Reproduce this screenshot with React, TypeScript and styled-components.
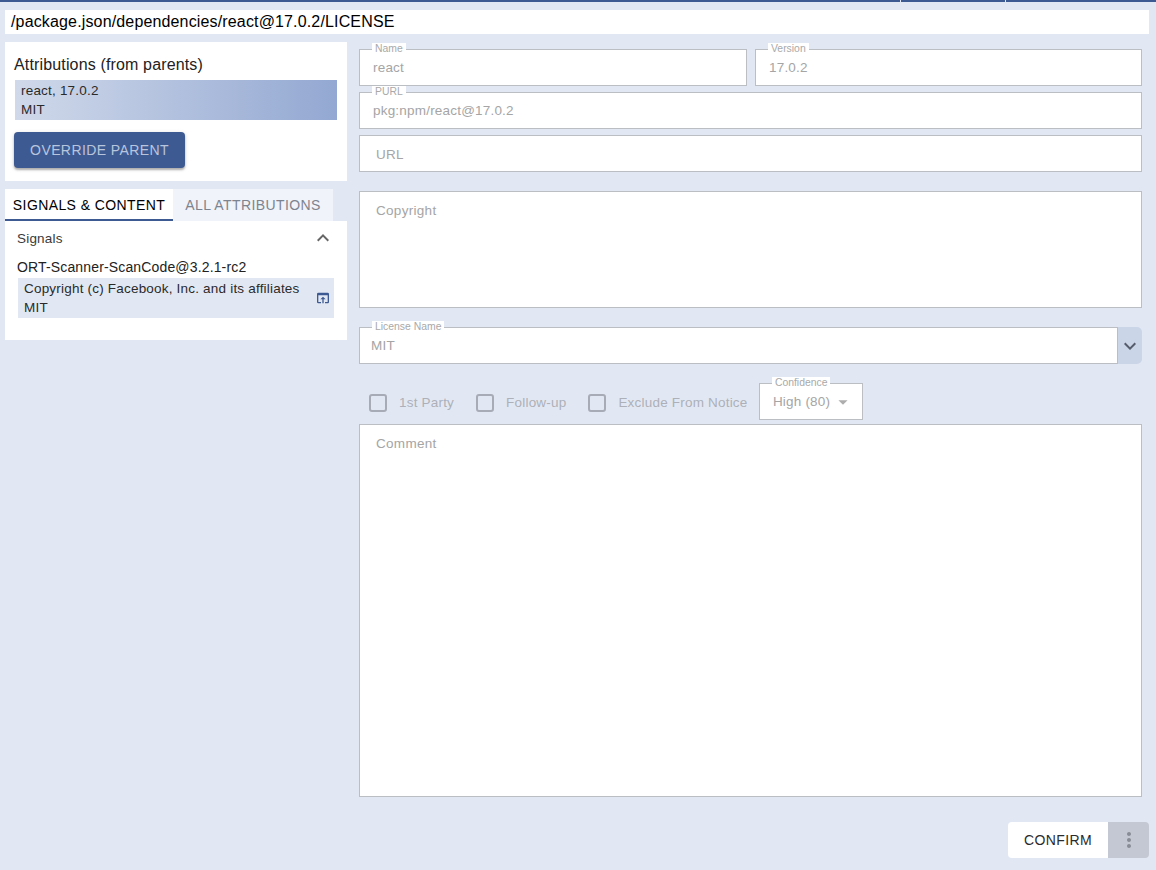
import { FC } from "react";
import styled, { createGlobalStyle } from "styled-components";
import {
  MdArrowDropDown,
  MdExpandLess,
  MdExpandMore,
  MdMoreVert,
  MdOpenInBrowser,
} from "react-icons/md";

const GlobalStyle = createGlobalStyle`
  html, body {
    margin: 0;
    padding: 0;
    height: 870px;
    overflow: hidden;
    background: #e2e8f3;
    font-family: "Liberation Sans", sans-serif;
  }
`;

const Page = styled.div`
  display: flex;
  flex-direction: column;
  width: 1156px;
  height: 870px;
`;

const TopBar = styled.div`
  display: flex;
  justify-content: flex-end;
  gap: 104px;
  height: 2px;
  padding-right: 150px;
  background: #3e5a93;
`;

const TopTick = styled.span`
  width: 1px;
  background: #e2e8f3;
`;

const PathBar = styled.div`
  height: 24px;
  margin: 8px 7px 8px 5px;
  padding-left: 6px;
  background: #fff;
  color: #000;
  font-size: 16px;
  line-height: 24px;
  letter-spacing: 0.15px;
`;

const Main = styled.div`
  display: flex;
  gap: 12px;
  padding-left: 5px;
`;

const LeftColumn = styled.div`
  display: flex;
  flex-direction: column;
  width: 342px;
`;

const ParentPanel = styled.section`
  height: 139px;
  margin-bottom: 8px;
  padding: 13px 10px 0 9px;
  box-sizing: border-box;
  background: #fff;
`;

const PanelTitle = styled.div`
  color: #222;
  font-size: 16px;
  letter-spacing: 0.15px;
  line-height: 20px;
  margin-bottom: 5px;
  height: 20px;
`;

const AttributionCard = styled.div`
  box-sizing: border-box;
  margin-left: 1px;
  height: 40px;
  padding: 1px 0 0 6px;
  background: linear-gradient(to right, #d0d9ea, #93a8d2);
  color: #2a2a2a;
  font-size: 13.5px;
  line-height: 19px;
  letter-spacing: 0.2px;
`;

const OverrideButton = styled.button`
  display: block;
  width: 171px;
  height: 36px;
  margin-top: 12px;
  padding: 0;
  border: 0;
  border-radius: 4px;
  background: #3e5a93;
  box-shadow: 0 2px 2px rgba(0, 0, 0, 0.25), 0 1px 4px rgba(0, 0, 0, 0.15);
  color: #b9c5dc;
  font-family: "Liberation Sans", sans-serif;
  font-size: 14px;
  font-weight: 400;
  letter-spacing: 0.4px;
  text-transform: uppercase;
`;

const Tabs = styled.div`
  display: flex;
  height: 32px;
`;

const Tab = styled.div<{ $active?: boolean }>`
  box-sizing: border-box;
  width: ${(p) => (p.$active ? "168px" : "160px")};
  padding-top: 7px;
  text-align: center;
  background: ${(p) => (p.$active ? "#fff" : "#f0f3f9")};
  border-bottom: 2px solid ${(p) => (p.$active ? "#3e5a93" : "transparent")};
  color: ${(p) => (p.$active ? "#000" : "#7e848f")};
  font-size: 14px;
  line-height: 18px;
  letter-spacing: 0.4px;
  text-transform: uppercase;
`;

const SignalsPanel = styled.section`
  display: flex;
  flex-direction: column;
  height: 119px;
  padding: 0 13px 0 12px;
  box-sizing: border-box;
  background: #fff;
`;

const SignalsHeader = styled.div`
  display: flex;
  align-items: center;
  justify-content: space-between;
  height: 34px;
  color: #3a3a3a;
  font-size: 13.5px;
  letter-spacing: 0.2px;
  svg {
    color: #666;
    margin-right: -1px;
  }
`;

const SourceName = styled.div`
  height: 23px;
  color: #222;
  font-size: 14px;
  line-height: 24px;
  letter-spacing: 0.15px;
`;

const SignalCard = styled.div`
  display: flex;
  align-items: center;
  justify-content: space-between;
  height: 40px;
  margin-left: 1px;
  padding: 0 3px 0 6px;
  background: #e2e8f3;
  color: #2a2a2a;
  font-size: 13.5px;
  line-height: 19px;
  letter-spacing: 0.2px;
  svg {
    color: #3e5a93;
  }
`;

const RightColumn = styled.div`
  display: flex;
  flex-direction: column;
  width: 790px;
  padding-top: 7px;
  box-sizing: border-box;
`;

const FormRows = styled.div`
  display: flex;
  flex-direction: column;
  width: 783px;
`;

const Row = styled.div<{ $after?: number }>`
  display: flex;
  gap: 8px;
  margin-bottom: ${(p) => p.$after ?? 6}px;
`;

const Field = styled.div<{ $height?: number; $width?: number }>`
  position: relative;
  box-sizing: border-box;
  flex: ${(p) => (p.$width ? `0 0 ${p.$width}px` : "1")};
  height: ${(p) => p.$height ?? 37}px;
  padding-left: 13px;
  background: #fff;
  border: 1px solid #bbbec3;
  color: #a5a5a5;
  font-size: 13.5px;
  line-height: 35px;
  letter-spacing: 0.2px;
`;

const FieldLabel = styled.span`
  position: absolute;
  top: -7px;
  left: 12px;
  padding: 1px 3px;
  background: #fff;
  color: #a9a9a9;
  font-size: 10.4px;
  line-height: 10px;
  letter-spacing: 0;
  white-space: nowrap;
`;

const Placeholder = styled.span`
  display: block;
  padding: 1px 0 0 3px;
  letter-spacing: 0.3px;
`;

const LicenseRow = styled.div`
  display: flex;
  margin-bottom: 19px;
`;

const LicenseField = styled(Field)`
  padding-left: 11px;
`;

const DropdownToggle = styled.div`
  display: flex;
  align-items: center;
  justify-content: center;
  width: 24px;
  height: 37px;
  background: #cbd5e8;
  border-radius: 0 5px 5px 0;
  color: #555d6b;
`;

const OptionsRow = styled.div`
  display: flex;
  align-items: flex-start;
  height: 37px;
  margin-bottom: 4px;
  padding-left: 10px;
`;

const CheckOption = styled.label`
  display: flex;
  align-items: center;
  gap: 12px;
  height: 20px;
  margin-top: 10px;
  margin-right: 22px;
  color: #adb0b8;
  font-size: 13.5px;
  letter-spacing: 0.2px;
  &:nth-of-type(3) {
    margin-right: 11.4px;
  }
`;

const CheckText = styled.span`
  line-height: 18px;
`;

const CheckBox = styled.span`
  display: block;
  box-sizing: border-box;
  width: 18px;
  height: 18px;
  border: 2px solid #a6abb6;
  border-radius: 3px;
`;

const ConfidenceSelect = styled(Field)`
  flex: none;
  display: flex;
  align-items: center;
  width: 104px;
  svg {
    margin-left: 2px;
    color: #adadad;
  }
`;

const Footer = styled.div`
  display: flex;
  justify-content: flex-end;
  margin-top: 25px;
`;

const ConfirmButton = styled.button`
  width: 100px;
  height: 36px;
  padding: 0;
  border: 0;
  border-radius: 4px 0 0 4px;
  background: #fff;
  color: #2b2b2b;
  font-family: "Liberation Sans", sans-serif;
  font-size: 14px;
  letter-spacing: 0.4px;
  text-transform: uppercase;
`;

const MoreButton = styled.button`
  display: flex;
  align-items: center;
  justify-content: center;
  width: 41px;
  height: 36px;
  padding: 0;
  border: 0;
  border-radius: 0 4px 4px 0;
  background: #c4c8d2;
  color: #888c95;
`;

const App: FC = () => {
  return (
    <Page>
      <GlobalStyle />
      <TopBar>
        <TopTick />
        <TopTick />
      </TopBar>
      <PathBar>/package.json/dependencies/react@17.0.2/LICENSE</PathBar>
      <Main>
        <LeftColumn>
          <ParentPanel>
            <PanelTitle>Attributions (from parents)</PanelTitle>
            <AttributionCard>
              react, 17.0.2
              <br />
              MIT
            </AttributionCard>
            <OverrideButton>Override parent</OverrideButton>
          </ParentPanel>
          <Tabs>
            <Tab $active>Signals &amp; Content</Tab>
            <Tab>All Attributions</Tab>
          </Tabs>
          <SignalsPanel>
            <SignalsHeader>
              Signals
              <MdExpandLess size={24} />
            </SignalsHeader>
            <SourceName>ORT-Scanner-ScanCode@3.2.1-rc2</SourceName>
            <SignalCard>
              <div>
                Copyright (c) Facebook, Inc. and its affiliates
                <br />
                MIT
              </div>
              <MdOpenInBrowser size={16} />
            </SignalCard>
          </SignalsPanel>
        </LeftColumn>
        <RightColumn>
          <FormRows>
            <Row>
              <Field $width={388}>
                <FieldLabel>Name</FieldLabel>
                react
              </Field>
              <Field>
                <FieldLabel>Version</FieldLabel>
                17.0.2
              </Field>
            </Row>
            <Row>
              <Field>
                <FieldLabel>PURL</FieldLabel>
                pkg:npm/react@17.0.2
              </Field>
            </Row>
            <Row $after={19}>
              <Field>
                <Placeholder>URL</Placeholder>
              </Field>
            </Row>
            <Row $after={19}>
              <Field $height={117}>
                <Placeholder>Copyright</Placeholder>
              </Field>
            </Row>
            <LicenseRow>
              <LicenseField>
                <FieldLabel>License Name</FieldLabel>
                MIT
              </LicenseField>
              <DropdownToggle>
                <MdExpandMore size={24} />
              </DropdownToggle>
            </LicenseRow>
            <OptionsRow>
              <CheckOption>
                <CheckBox />
                <CheckText>1st Party</CheckText>
              </CheckOption>
              <CheckOption>
                <CheckBox />
                <CheckText>Follow-up</CheckText>
              </CheckOption>
              <CheckOption>
                <CheckBox />
                <CheckText>Exclude From Notice</CheckText>
              </CheckOption>
              <ConfidenceSelect>
                <FieldLabel>Confidence</FieldLabel>
                High (80)
                <MdArrowDropDown size={22} />
              </ConfidenceSelect>
            </OptionsRow>
            <Row $after={0}>
              <Field $height={373}>
                <Placeholder>Comment</Placeholder>
              </Field>
            </Row>
          </FormRows>
          <Footer>
            <ConfirmButton>Confirm</ConfirmButton>
            <MoreButton>
              <MdMoreVert size={24} />
            </MoreButton>
          </Footer>
        </RightColumn>
      </Main>
    </Page>
  );
};

export default App;
